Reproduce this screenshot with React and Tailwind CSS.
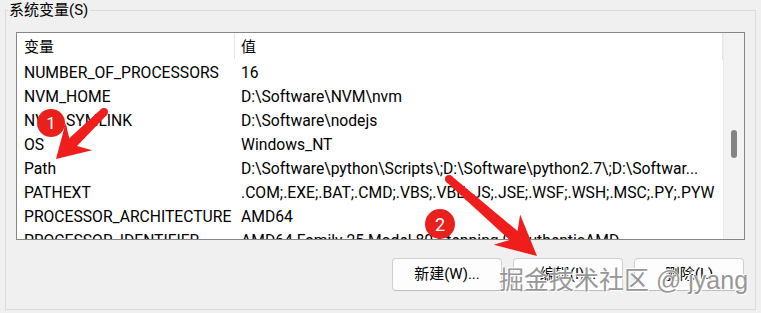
import React from "react";

const rows = [
  ["NUMBER_OF_PROCESSORS", "16"],
  ["NVM_HOME", "D:\\Software\\NVM\\nvm"],
  ["NVM_SYMLINK", "D:\\Software\\nodejs"],
  ["OS", "Windows_NT"],
  ["Path", "D:\\Software\\python\\Scripts\\;D:\\Software\\python2.7\\;D:\\Softwar..."],
  ["PATHEXT", ".COM;.EXE;.BAT;.CMD;.VBS;.VBE;.JS;.JSE;.WSF;.WSH;.MSC;.PY;.PYW"],
  ["PROCESSOR_ARCHITECTURE", "AMD64"],
  ["PROCESSOR_IDENTIFIER", "AMD64 Family 25 Model 80 Stepping 0, AuthenticAMD"],
];

function arrowPoints(tx, ty, hx, hy, headLen, headHalf, tailW, neckW, notch) {
  const L = Math.hypot(hx - tx, hy - ty);
  const dx = (hx - tx) / L;
  const dy = (hy - ty) / L;
  const px = -dy;
  const py = dx;
  const bx = hx - dx * headLen;
  const by = hy - dy * headLen;
  const nx = bx + dx * notch;
  const ny = by + dy * notch;
  const pts = [
    [tx + (px * tailW) / 2, ty + (py * tailW) / 2],
    [nx + (px * neckW) / 2, ny + (py * neckW) / 2],
    [bx + px * headHalf, by + py * headHalf],
    [hx, hy],
    [bx - px * headHalf, by - py * headHalf],
    [nx - (px * neckW) / 2, ny - (py * neckW) / 2],
    [tx - (px * tailW) / 2, ty - (py * tailW) / 2],
  ];
  return pts.map((p) => p[0].toFixed(1) + "," + p[1].toFixed(1)).join(" ");
}

function Button({ children }) {
  return (
    <button className="w-[110px] h-[33px] rounded-[4px] border border-[#d0d0d0] border-b-[#bdbdbd] bg-[#fdfdfd] text-[15px] text-black flex items-center justify-center">
      {children}
    </button>
  );
}

export default function App() {
  return (
    <div className="relative w-[761px] h-[313px] overflow-hidden bg-[#f0f0f0] text-black font-['Roboto','Noto_Sans_CJK_SC',sans-serif]">
      <fieldset className="ml-[5px] w-[751px] h-[310px] border border-[#dcdcdc] flex flex-col">
        <legend className="ml-[3px] pr-[2px] h-[20px] leading-[20px] text-[15px]">系统变量(S)</legend>

        <div className="mt-[12px] ml-[10px] w-[729px] h-[208px] border border-[#868686] bg-white flex overflow-hidden">
          <div className="flex-1 flex flex-col overflow-hidden">
            <div className="h-[28px] shrink-0 flex text-[15px]">
              <div className="w-[217px] pl-[7px] flex items-center">变量</div>
              <div className="w-px h-[26px] bg-[#e5e5e5]" />
              <div className="flex-1 pl-[6px] flex items-center">值</div>
              <div className="w-px h-[27px] bg-[#e5e5e5]" />
            </div>
            {rows.map(([name, value]) => (
              <div key={name} className="h-[24px] shrink-0 flex items-center text-[15.7px] whitespace-nowrap">
                <div className="w-[218px] pl-[7px] overflow-hidden">{name}</div>
                <div className="flex-1 pl-[6px] overflow-hidden">{value}</div>
              </div>
            ))}
          </div>
          <div className="w-[21px] shrink-0 bg-[#f3f3f3] border-l border-[#ececec] flex flex-col items-center">
            <div className="mt-[97px] w-[6px] h-[28px] rounded-[3px] bg-[#858585]" />
          </div>
        </div>

        <div className="mt-[18px] mr-[11px] flex justify-end gap-[11px]">
          <Button>新建(W)...</Button>
          <Button>编辑(I)...</Button>
          <Button>删除(L)</Button>
        </div>
      </fieldset>

      {/* annotation overlay */}
      <svg className="absolute left-0 top-0 pointer-events-none" width="761" height="313" viewBox="0 0 761 313">
        <polygon points={arrowPoints(104, 112, 56, 159, 32, 19, 8, 11, 8)} fill="#f01d1d" />
        <circle cx="104" cy="112" r="4" fill="#f01d1d" />
        <polygon points={arrowPoints(449, 179, 537, 256, 40, 20, 8, 12, 9)} fill="#f01d1d" />
        <circle cx="449" cy="179" r="4" fill="#f01d1d" />
        <circle cx="51" cy="123" r="14" fill="#e8211d" />
        <text x="51" y="129" textAnchor="middle" fontSize="17" fill="#fff" fontFamily="Roboto, sans-serif">1</text>
        <circle cx="440" cy="224" r="15" fill="#e8211d" />
        <text x="440" y="230.5" textAnchor="middle" fontSize="18" fill="#fff" fontFamily="Roboto, sans-serif">2</text>
      </svg>

      <div className="absolute left-[499px] top-[264px] text-[25px] leading-[32px] whitespace-nowrap text-[#979797] [text-shadow:0_0_1px_#ffffff,1px_1px_0_#ffffff,-1px_-1px_0_#ffffff] font-['Liberation_Sans','Noto_Sans_CJK_SC',sans-serif]">
        掘金技术社区 @ jyang
      </div>
    </div>
  );
}
